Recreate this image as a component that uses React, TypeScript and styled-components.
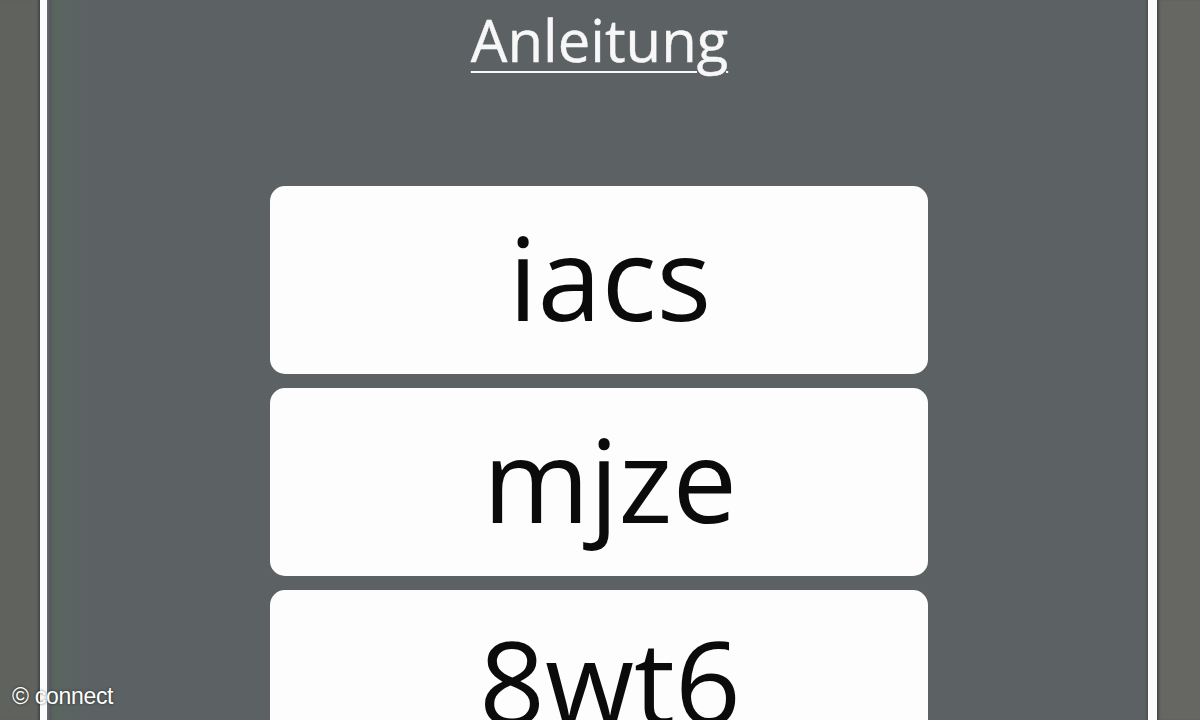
import React from "react";
import styled, { createGlobalStyle } from "styled-components";

const codes = ["iacs", "mjze", "8wt6"];

const GlobalStyle = createGlobalStyle`
  html, body {
    margin: 0;
    padding: 0;
    background: #5c6163;
  }
`;

const Screen = styled.div`
  position: relative;
  display: flex;
  flex-direction: row;
  width: 1200px;
  height: 720px;
  overflow: hidden;
  font-family: "Open Sans", "Noto Sans", sans-serif;
`;

const Bezel = styled.div<{ $side: "left" | "right"; $width: number }>`
  flex: 0 0 ${(p) => p.$width}px;
  background: ${(p) => (p.$side === "left" ? "#60635d" : "#666763")};
  box-shadow: ${(p) =>
    p.$side === "left"
      ? "inset -3px 0 2px -1px #45474a"
      : "inset 3px 0 2px -1px #45474a"};
`;

const Frame = styled.div`
  flex: 1;
  display: flex;
  border-left: 7px solid #fbfbfb;
  border-right: 9px solid #fbfbfb;
`;

const Panel = styled.div`
  flex: 1;
  display: flex;
  flex-direction: column;
  align-items: center;
  padding-top: 1px;
  background: linear-gradient(
    90deg,
    #6a6c70 0px,
    #55595c 3px,
    #59645f 6px,
    #5c6263 40px,
    #5c6163 100%
  );
  box-shadow: inset -4px 0 2px -2px #4f5356;
`;

const GuideLink = styled.a`
  color: #f7f7f7;
  font-size: 58px;
  line-height: 78px;
  text-decoration: underline;
  text-decoration-thickness: 2px;
  text-underline-offset: 9px;
  margin-left: 4px;
  -webkit-text-stroke: 0.4px #f7f7f7;
`;

const CodeList = styled.div`
  display: flex;
  flex-direction: column;
  gap: 14px;
  margin-top: 107px;
  margin-left: 3px;
`;

const CodeButton = styled.div`
  width: 658px;
  height: 188px;
  display: flex;
  align-items: center;
  justify-content: center;
  background: #fdfdfd;
  border-radius: 15px;
  color: #0b0b0b;
  font-size: 115px;
  line-height: 1;
  padding: 0 0 8px 22px;
  box-sizing: border-box;
`;

const Watermark = styled.div`
  position: absolute;
  left: 12px;
  bottom: 10px;
  color: #ffffff;
  font-family: "Liberation Sans", Arial, sans-serif;
  font-size: 23px;
  letter-spacing: -0.3px;
  text-shadow: 0 0 3px rgba(0, 0, 0, 0.6);
`;

const App: React.FC = () => {
  return (
    <>
      <GlobalStyle />
      <Screen>
        <Bezel $side="left" $width={40} />
        <Frame>
          <Panel>
            <GuideLink>Anleitung</GuideLink>
            <CodeList>
              {codes.map((code) => (
                <CodeButton key={code}>{code}</CodeButton>
              ))}
            </CodeList>
          </Panel>
        </Frame>
        <Bezel $side="right" $width={43} />
        <Watermark>© connect</Watermark>
      </Screen>
    </>
  );
};

export default App;
